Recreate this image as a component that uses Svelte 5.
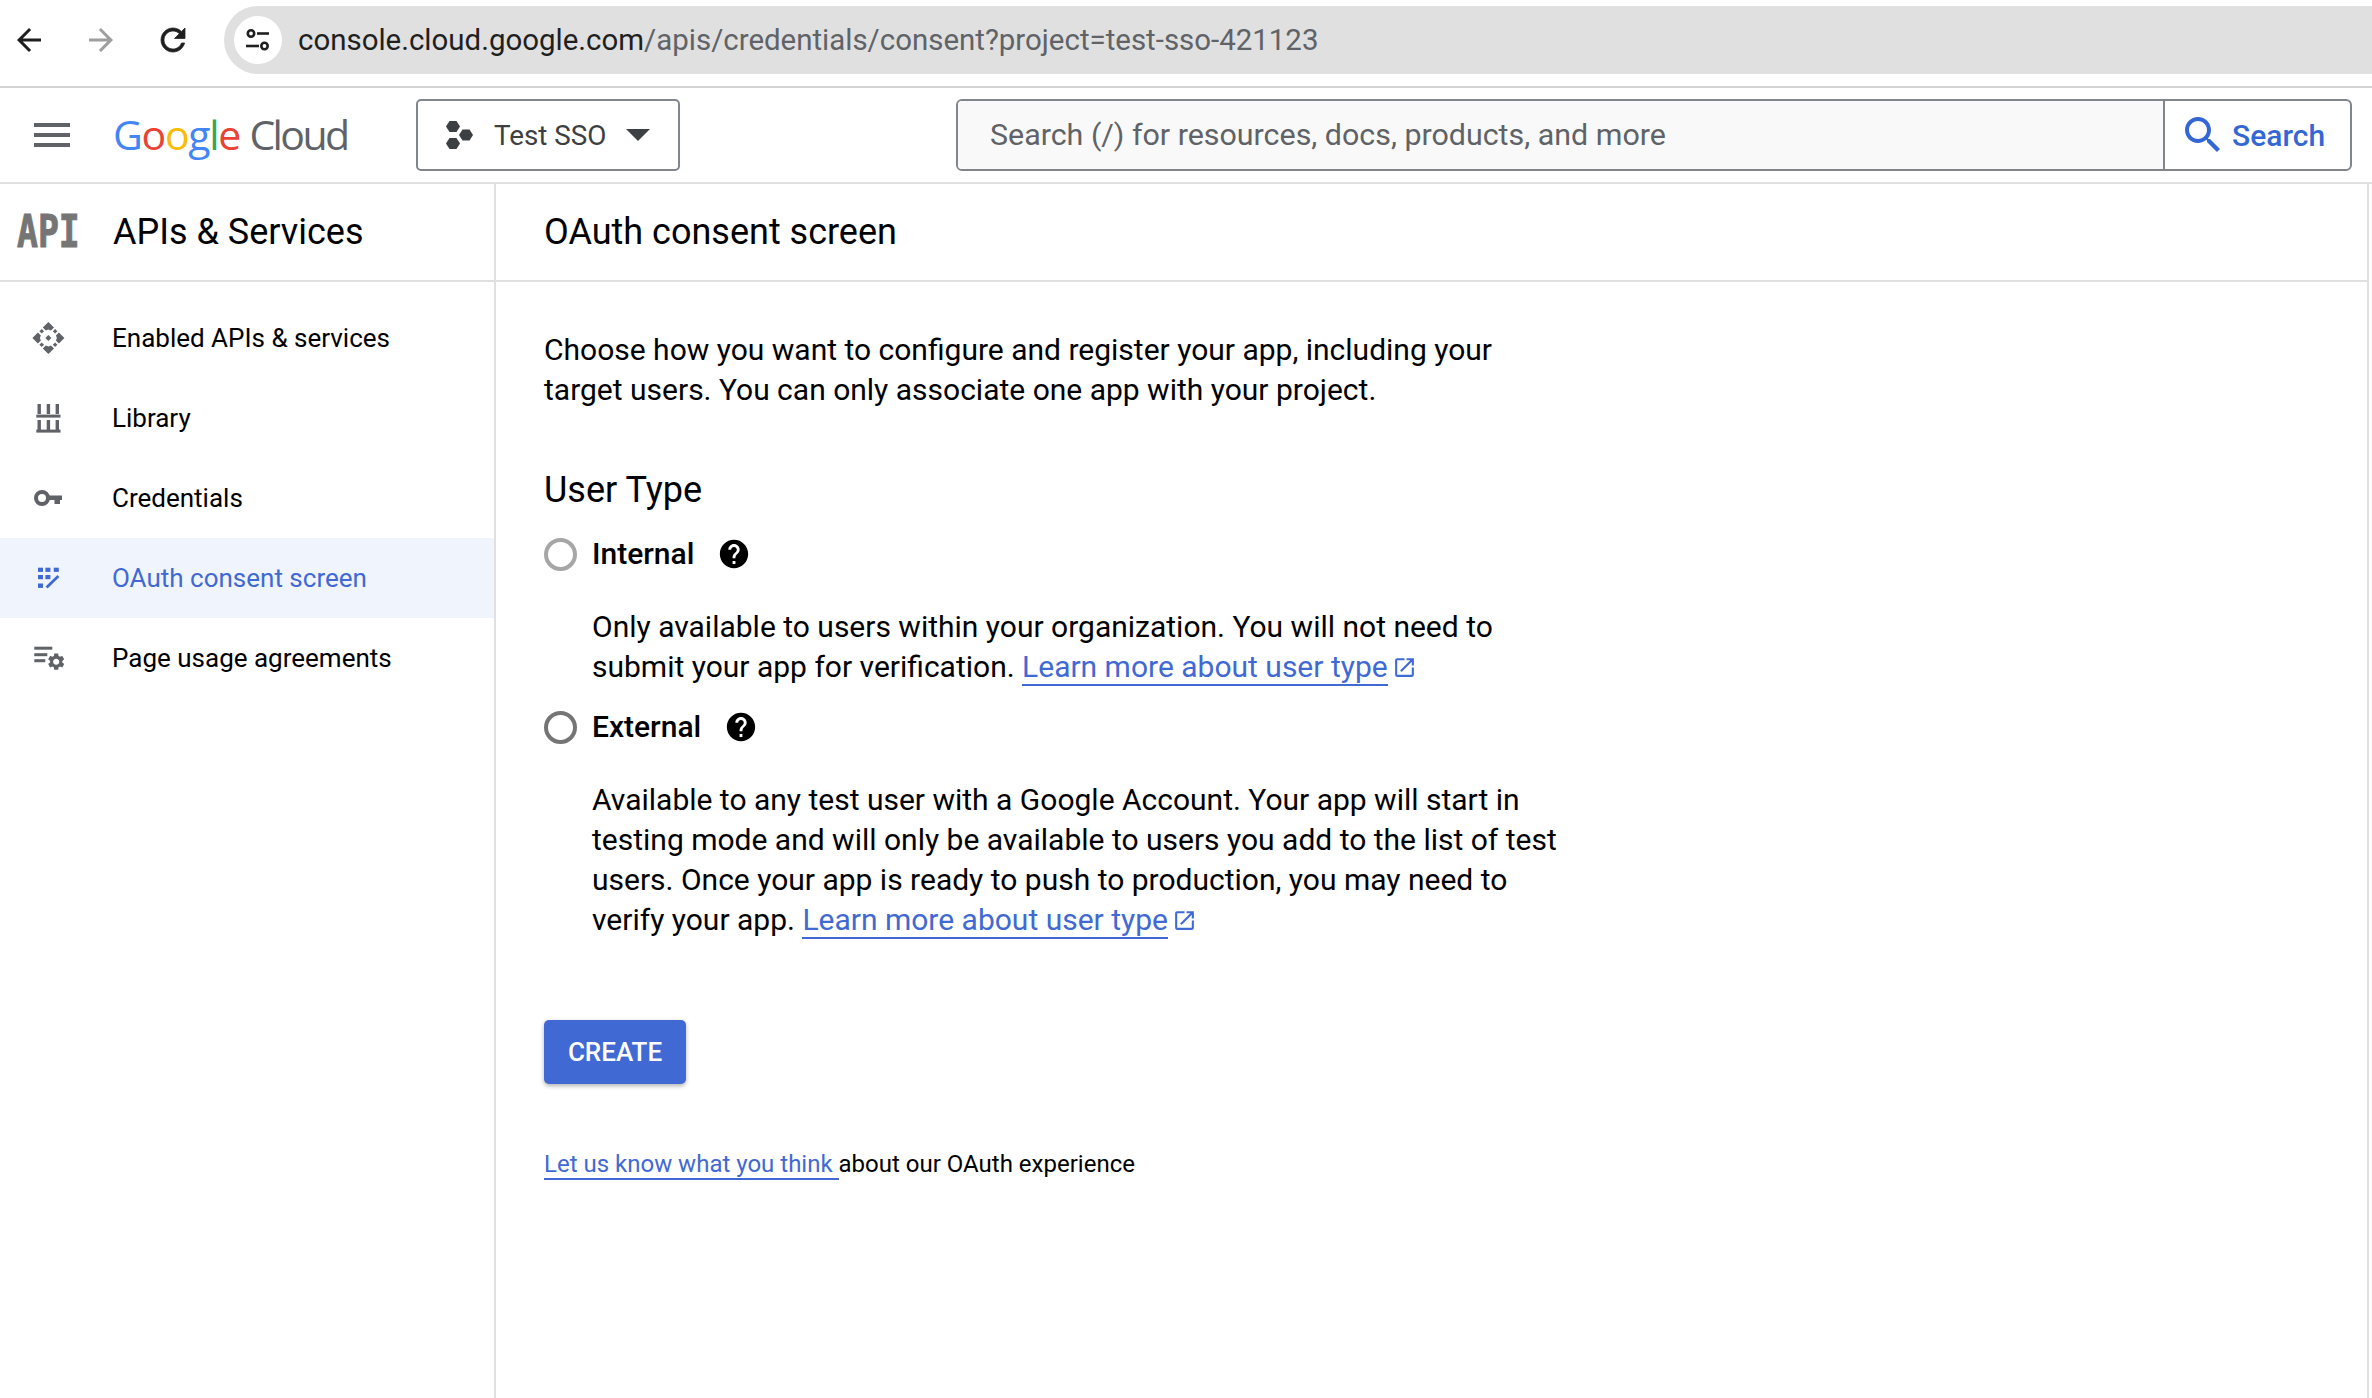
<script lang="ts">
	const helpPath =
		'M12 2C6.48 2 2 6.48 2 12s4.48 10 10 10 10-4.48 10-10S17.52 2 12 2zm1 17h-2v-2h2v2zm2.07-7.75l-.9.92C13.45 12.9 13 13.5 13 15h-2v-.5c0-1.1.45-2.1 1.17-2.83l1.24-1.26c.37-.36.59-.86.59-1.41 0-1.1-.9-2-2-2s-2 .9-2 2H8c0-2.21 1.79-4 4-4s4 1.79 4 4c0 .88-.36 1.68-.93 2.25z';
	const openPath =
		'M19 19H5V5h7V3H5c-1.11 0-2 .9-2 2v14c0 1.1.89 2 2 2h14c1.1 0 2-.9 2-2v-7h-2v7zM14 3v2h3.59l-9.83 9.83 1.41 1.41L19 6.41V10h2V3h-7z';
	const gearPath =
		'M19.14 12.94c.04-.3.06-.61.06-.94 0-.32-.02-.64-.07-.94l2.03-1.58c.18-.14.23-.41.12-.61l-1.92-3.32c-.12-.22-.37-.29-.59-.22l-2.39.96c-.5-.38-1.03-.7-1.62-.94l-.36-2.54c-.04-.24-.24-.41-.48-.41h-3.84c-.24 0-.43.17-.47.41l-.36 2.54c-.59.24-1.13.57-1.62.94l-2.39-.96c-.22-.08-.47 0-.59.22L2.74 8.87c-.12.21-.08.47.12.61l2.03 1.58c-.05.3-.09.63-.09.94s.02.64.07.94l-2.03 1.58c-.18.14-.23.41-.12.61l1.92 3.32c.12.22.37.29.59.22l2.39-.96c.5.38 1.03.7 1.62.94l.36 2.54c.05.24.24.41.48.41h3.84c.24 0 .44-.17.47-.41l.36-2.54c.59-.24 1.13-.56 1.62-.94l2.39.96c.22.08.47 0 .59-.22l1.92-3.32c.12-.22.07-.47-.12-.61l-2.01-1.58zM12 15.6c-1.98 0-3.6-1.62-3.6-3.6s1.62-3.6 3.6-3.6 3.6 1.62 3.6 3.6-1.62 3.6-3.6 3.6z';

	const navItems = [
		{ id: 'enabled', label: 'Enabled APIs & services' },
		{ id: 'library', label: 'Library' },
		{ id: 'credentials', label: 'Credentials' },
		{ id: 'oauth', label: 'OAuth consent screen', active: true },
		{ id: 'usage', label: 'Page usage agreements' }
	];
	const quarters = [0, 90, 180, 270];
</script>

{#snippet externalIcon()}
	<svg class="ext" viewBox="0 0 24 24" width="25" height="25"><path d={openPath} fill="#4169d4" /></svg>
{/snippet}

{#snippet helpIcon()}
	<svg viewBox="0 0 24 24" width="34" height="34"><path d={helpPath} fill="#000" /></svg>
{/snippet}

<div class="page">
	<div class="browser-bar">
		<div class="nav-buttons">
			<svg viewBox="0 0 24 24" width="36" height="36"><path fill="#1f1f1f" d="M20 11H7.83l5.59-5.59L12 4l-8 8 8 8 1.41-1.41L7.83 13H20v-2z" /></svg>
			<svg viewBox="0 0 24 24" width="36" height="36"><path fill="#9e9e9e" d="M4 11h12.17l-5.59-5.59L12 4l8 8-8 8-1.41-1.41L16.17 13H4v-2z" /></svg>
			<svg viewBox="0 0 24 24" width="36" height="36"><path fill="#1f1f1f" stroke="#1f1f1f" stroke-width="0.5" d="M17.65 6.35C16.2 4.9 14.21 4 12 4c-4.42 0-7.99 3.58-7.99 8s3.57 8 7.99 8c3.73 0 6.84-2.55 7.73-6h-2.08c-.82 2.33-3.04 4-5.65 4-3.31 0-6-2.69-6-6s2.69-6 6-6c1.66 0 3.14.69 4.22 1.78L13 11h7V4l-2.35 2.35z" /></svg>
		</div>
		<div class="omnibox">
			<span class="site-info">
				<svg viewBox="0 0 28 28" width="28" height="28" fill="none" stroke="#1f1f1f" stroke-width="2.6">
					<circle cx="7" cy="7.5" r="3.2" />
					<path d="M13 7.5h12" />
					<circle cx="20.5" cy="20" r="3.2" />
					<path d="M2 20h13" />
				</svg>
			</span>
			<span class="url"><span class="host">console.cloud.google.com</span>/apis/credentials/consent?project=test-sso-421123</span>
		</div>
	</div>

	<header class="top-bar">
		<svg class="menu" viewBox="0 0 36 24" width="36" height="24">
			<rect width="36" height="4" fill="#5f6368" />
			<rect y="10" width="36" height="4" fill="#5f6368" />
			<rect y="20" width="36" height="4" fill="#5f6368" />
		</svg>
		<div class="logo">
			<span class="b">G</span><span class="r">o</span><span class="y">o</span><span class="b">g</span><span class="g">l</span><span class="r">e</span>
			<span class="cloud">Cloud</span>
		</div>
		<button class="project">
			<svg viewBox="0 0 27 28" width="27" height="28" fill="#3c4043">
				<polygon points="0,5.5 3.5,0 10.5,0 14,5.5 10.5,11 3.5,11" />
				<polygon points="0,5.5 3.5,0 10.5,0 14,5.5 10.5,11 3.5,11" transform="translate(0 17)" />
				<polygon points="0,5.5 3.5,0 10.5,0 14,5.5 10.5,11 3.5,11" transform="translate(13 8.5)" />
			</svg>
			<span>Test SSO</span>
			<svg viewBox="0 0 24 12" width="24" height="12"><path d="M0 0h24L12 12z" fill="#3c4043" /></svg>
		</button>
		<div class="search">
			<div class="search-input">Search (/) for resources, docs, products, and more</div>
			<div class="search-btn">
				<svg viewBox="0 0 24 24" width="48" height="48"><path fill="#3367d6" d="M15.5 14h-.79l-.28-.27C15.41 12.59 16 11.11 16 9.5 16 5.91 13.09 3 9.5 3S3 5.91 3 9.5 5.91 16 9.5 16c1.61 0 3.09-.59 4.23-1.57l.27.28v.79l5 4.99L20.49 19l-4.99-5zm-6 0C7.01 14 5 11.99 5 9.5S7.01 5 9.5 5 14 7.01 14 9.5 11.99 14 9.5 14z" /></svg>
				<span>Search</span>
			</div>
		</div>
	</header>

	<div class="body">
		<aside class="sidebar">
			<div class="sidebar-head">
				<span class="api-logo">API</span>
				<h2>APIs &amp; Services</h2>
			</div>
			<nav>
				{#each navItems as item}
					<a href="#top" class="nav-item" class:active={item.active}>
						<svg viewBox="0 0 36 36" width="36" height="36" class="nav-icon">
							{#if item.id === 'enabled'}
								<g fill="#5f6368">
									<polygon points="18.4,15 21.4,18 18.4,21 15.4,18" />
									{#each quarters as angle}
										<g transform="rotate({angle} 18.4 18)">
											<polygon points="18.4,2 24,7.5 21,10.5 18.4,9.5 15.8,10.5 12.8,7.5" />
											<polygon points="11.7,9 14,11.3 11.7,13.6 9.4,11.3" />
										</g>
									{/each}
								</g>
							{:else if item.id === 'library'}
								<g fill="#5f6368">
									<rect x="7.5" y="4" width="3.4" height="10" />
									<rect x="16.7" y="4" width="3.4" height="10" />
									<rect x="25.6" y="4" width="3.4" height="10" />
									<rect x="6.3" y="14.6" width="24.2" height="3" />
									<rect x="7.5" y="20" width="3.4" height="10" />
									<rect x="16.7" y="20" width="3.4" height="10" />
									<rect x="25.6" y="20" width="3.4" height="10" />
									<rect x="6.3" y="29.6" width="24.2" height="3" />
								</g>
							{:else if item.id === 'credentials'}
								<circle cx="12" cy="18" r="6" fill="none" stroke="#5f6368" stroke-width="4" />
								<path fill="#5f6368" d="M18 15.5h14v4.5h-2v4h-5.5v-4H18z" />
							{:else if item.id === 'oauth'}
								<g fill="#4169d4">
									<rect x="8" y="7.7" width="5" height="4.2" />
									<rect x="15.4" y="7.7" width="5" height="4.2" />
									<rect x="23.8" y="7.7" width="5" height="4.2" />
									<rect x="8" y="15" width="5" height="4.2" />
									<rect x="15.4" y="15" width="5" height="4.2" />
									<rect x="8" y="23.5" width="5" height="4.4" />
								</g>
								<path d="M16.6 27.4L28.4 16" stroke="#4169d4" stroke-width="2.8" fill="none" />
							{:else}
								<g fill="#5f6368">
									<rect x="4.3" y="6.7" width="18" height="3" />
									<rect x="4.3" y="13.2" width="13" height="3" />
									<rect x="4.3" y="19.2" width="11" height="3" />
									<path d={gearPath} transform="translate(16 11.5) scale(0.85)" />
								</g>
							{/if}
						</svg>
						<span>{item.label}</span>
					</a>
				{/each}
			</nav>
		</aside>

		<main class="main">
			<div class="main-head"><h1>OAuth consent screen</h1></div>
			<div class="content">
				<p class="intro">
					Choose how you want to configure and register your app, including your<br />
					target users. You can only associate one app with your project.
				</p>
				<h3>User Type</h3>

				<div class="radio-row">
					<span class="radio light"></span>
					<span class="radio-label">Internal</span>
					{@render helpIcon()}
				</div>
				<p class="desc">
					Only available to users within your organization. You will not need to<br />
					submit your app for verification. <a href="#top">Learn more about user type</a>{@render externalIcon()}
				</p>

				<div class="radio-row">
					<span class="radio"></span>
					<span class="radio-label">External</span>
					{@render helpIcon()}
				</div>
				<p class="desc">
					Available to any test user with a Google Account. Your app will start in<br />
					testing mode and will only be available to users you add to the list of test<br />
					users. Once your app is ready to push to production, you may need to<br />
					verify your app. <a href="#top">Learn more about user type</a>{@render externalIcon()}
				</p>

				<button class="create">CREATE</button>

				<p class="feedback"><a href="#top">Let us know what you think&nbsp;</a>about our OAuth experience</p>
			</div>
		</main>
	</div>
</div>

<style>
	:global(body) {
		margin: 0;
		background: #fff;
		overflow: hidden;
	}

	.page {
		height: 1398px;
		display: flex;
		flex-direction: column;
		font-family: Roboto, 'Liberation Sans', sans-serif;
		color: #000;
	}

	.browser-bar {
		height: 86px;
		border-bottom: 2px solid #d3d3d3;
		display: flex;
		align-items: flex-start;
		flex-shrink: 0;
		background: #fff;
	}

	.nav-buttons {
		display: flex;
		gap: 36px;
		padding: 22px 0 0 11px;
		width: 224px;
		box-sizing: border-box;
		flex-shrink: 0;
	}

	.omnibox {
		flex: 1;
		height: 68px;
		margin-top: 6px;
		background: #e0e0e0;
		border-radius: 34px 0 0 34px;
		display: flex;
		align-items: center;
		padding-left: 10px;
	}

	.site-info {
		width: 48px;
		height: 48px;
		border-radius: 50%;
		background: #fff;
		display: flex;
		align-items: center;
		justify-content: center;
		margin-right: 16px;
	}

	.url {
		font-size: 29.45px;
		color: #5f6368;
		white-space: nowrap;
	}

	.host {
		color: #1f1f1f;
	}

	.top-bar {
		height: 94px;
		border-bottom: 2px solid #e0e0e0;
		display: flex;
		align-items: center;
		flex-shrink: 0;
		padding-left: 34px;
	}

	.logo {
		margin-left: 43px;
		width: 303px;
		flex-shrink: 0;
		font-family: 'Open Sans', sans-serif;
		font-size: 41px;
		letter-spacing: -1.3px;
		white-space: nowrap;
		margin-top: -3px;
	}

	.b { color: #4285f4; }
	.r { color: #ea4335; }
	.y { color: #fbbc04; }
	.g { color: #34a853; }
	.cloud {
		color: #5f6368;
		letter-spacing: -2.6px;
	}

	.project {
		width: 264px;
		height: 72px;
		box-sizing: border-box;
		border: 2px solid #80868b;
		border-radius: 5px;
		background: #fff;
		display: flex;
		align-items: center;
		padding: 0 0 0 28px;
		font-family: inherit;
		font-size: 27.8px;
		color: #3c4043;
		flex-shrink: 0;
	}

	.project span {
		margin: 0 20px 0 21px;
	}

	.search {
		margin-left: 276px;
		width: 1396px;
		height: 72px;
		box-sizing: border-box;
		border: 2px solid #80868b;
		border-radius: 6px;
		display: flex;
		flex-shrink: 0;
	}

	.search-input {
		flex: 1;
		background: #f9f9f9;
		border-right: 2px solid #80868b;
		border-radius: 4px 0 0 4px;
		display: flex;
		align-items: center;
		padding-left: 32px;
		font-size: 30.4px;
		color: #5f6368;
		padding-bottom: 2px;
		box-sizing: border-box;
	}

	.search-btn {
		width: 185px;
		display: flex;
		align-items: center;
		padding-left: 14px;
		box-sizing: border-box;
		gap: 5px;
		color: #3367d6;
		font-size: 30px;
		font-weight: 500;
	}

	.body {
		flex: 1;
		display: flex;
		min-height: 0;
	}

	.sidebar {
		width: 496px;
		box-sizing: border-box;
		border-right: 2px solid #e0e0e0;
		flex-shrink: 0;
	}

	.sidebar-head {
		height: 96px;
		border-bottom: 2px solid #e0e0e0;
		display: flex;
		align-items: center;
		padding-left: 17px;
	}

	.sidebar-head h2 {
		margin: 0 0 0 16px;
		font-size: 36px;
		font-weight: 400;
	}

	.api-logo {
		width: 80px;
		font-family: 'DejaVu Sans Mono', monospace;
		font-weight: 700;
		font-size: 44px;
		line-height: 44px;
		color: #757575;
		-webkit-text-stroke: 1px #757575;
		transform: scaleX(0.79);
		transform-origin: left center;
	}

	nav {
		padding-top: 16px;
	}

	.nav-item {
		height: 80px;
		display: flex;
		align-items: center;
		padding-left: 30px;
		gap: 46px;
		font-size: 26px;
		color: #000;
		text-decoration: none;
	}

	.nav-item.active {
		background: #f0f4fd;
		color: #4169d4;
	}

	.main {
		flex: 1;
		border-right: 2px solid #e0e0e0;
		margin-right: 3px;
		min-width: 0;
	}

	.main-head {
		height: 96px;
		border-bottom: 2px solid #e0e0e0;
		display: flex;
		align-items: center;
		padding-left: 48px;
	}

	h1 {
		margin: 0;
		font-size: 36px;
		font-weight: 400;
	}

	.content {
		padding: 48px 0 0 48px;
	}

	.intro {
		margin: 0;
		font-size: 30px;
		line-height: 40px;
	}

	h3 {
		margin: 60px 0 27px;
		font-size: 36px;
		line-height: 40px;
		font-weight: 400;
	}

	.radio-row {
		height: 34px;
		display: flex;
		align-items: center;
		margin-top: 23px;
	}

	h3 + .radio-row {
		margin-top: 0;
	}

	.radio {
		width: 33px;
		height: 33px;
		box-sizing: border-box;
		border: 4px solid #757575;
		border-radius: 50%;
		margin-right: 15px;
	}

	.radio.light {
		border-color: #a6a6a6;
	}

	.radio-label {
		font-size: 30px;
		font-weight: 500;
		margin-right: 23px;
		padding-bottom: 2px;
	}

	.desc {
		margin: 36px 0 0 48px;
		font-size: 30px;
		line-height: 40px;
	}

	.desc a,
	.feedback a {
		color: #4169d4;
		text-decoration: none;
		border-bottom: 2px solid #4169d4;
	}

	.ext {
		vertical-align: -3px;
		margin-left: 4px;
	}

	.create {
		display: block;
		margin-top: 80px;
		width: 142px;
		height: 64px;
		border: none;
		border-radius: 5px;
		background: #4169d4;
		color: #fff;
		font-family: inherit;
		font-size: 26px;
		font-weight: 500;
		box-shadow: 0 2px 4px rgba(60, 64, 67, 0.4);
	}

	.feedback {
		margin: 65px 0 0;
		font-size: 24px;
		line-height: 30px;
	}
</style>
